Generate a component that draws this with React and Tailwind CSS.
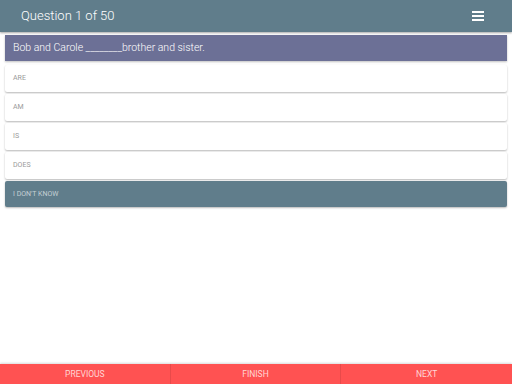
import React from "react";

const options = ["Are", "Am", "Is", "Does"];

export default function App() {
  return (
    <div className="relative flex h-[384px] w-[512px] flex-col overflow-hidden bg-white font-['Roboto',sans-serif]">
      {/* Header */}
      <div className="flex h-[32px] shrink-0 items-center justify-between bg-[#607d8b] pl-[21px] pr-[28px] shadow-[0_1px_2px_rgba(0,0,0,0.35)]">
        <span className="text-[13px] font-light text-white">Question 1 of 50</span>
        <svg width="12" height="10" viewBox="0 0 12 10" className="text-white">
          <rect x="0" y="0" width="12" height="2" fill="currentColor" />
          <rect x="0" y="4" width="12" height="2" fill="currentColor" />
          <rect x="0" y="8" width="12" height="2" fill="currentColor" />
        </svg>
      </div>

      {/* Question */}
      <div className="mx-[5px] mt-[3px] flex h-[26px] items-center bg-[#6c7096] px-[8px] shadow-[0_1px_2px_rgba(0,0,0,0.25)]">
        <span className="text-[10.5px] font-light text-white">Bob and Carole ________brother and sister.</span>
      </div>

      {/* Options */}
      <div className="mx-[5px] mt-[4px] flex flex-col gap-[2px]">
        {options.map((o) => (
          <div
            key={o}
            className="flex h-[27px] items-center rounded-[2px] bg-white px-[8px] shadow-[0_1px_2px_rgba(0,0,0,0.28)]"
          >
            <span className="text-[7px] uppercase text-[#9a9a9a]">{o}</span>
          </div>
        ))}
        <div className="flex h-[26px] items-center rounded-[2px] bg-[#607d8b] px-[8px] shadow-[0_1px_2px_rgba(0,0,0,0.28)]">
          <span className="text-[7px] uppercase text-[#c5d0d5]">I don't know</span>
        </div>
      </div>

      <div className="flex-1" />

      {/* Footer */}
      <div className="grid h-[20px] shrink-0 grid-cols-3 bg-[#ff5252] text-[8.5px] uppercase text-[#ffd6d6] shadow-[0_-1px_2px_rgba(0,0,0,0.15)]">
        <div className="flex items-center justify-center border-r border-[#e84a4a] pt-[1px]">Previous</div>
        <div className="flex items-center justify-center border-r border-[#e84a4a] pt-[1px]">Finish</div>
        <div className="flex items-center justify-center pt-[1px]">Next</div>
      </div>
    </div>
  );
}
